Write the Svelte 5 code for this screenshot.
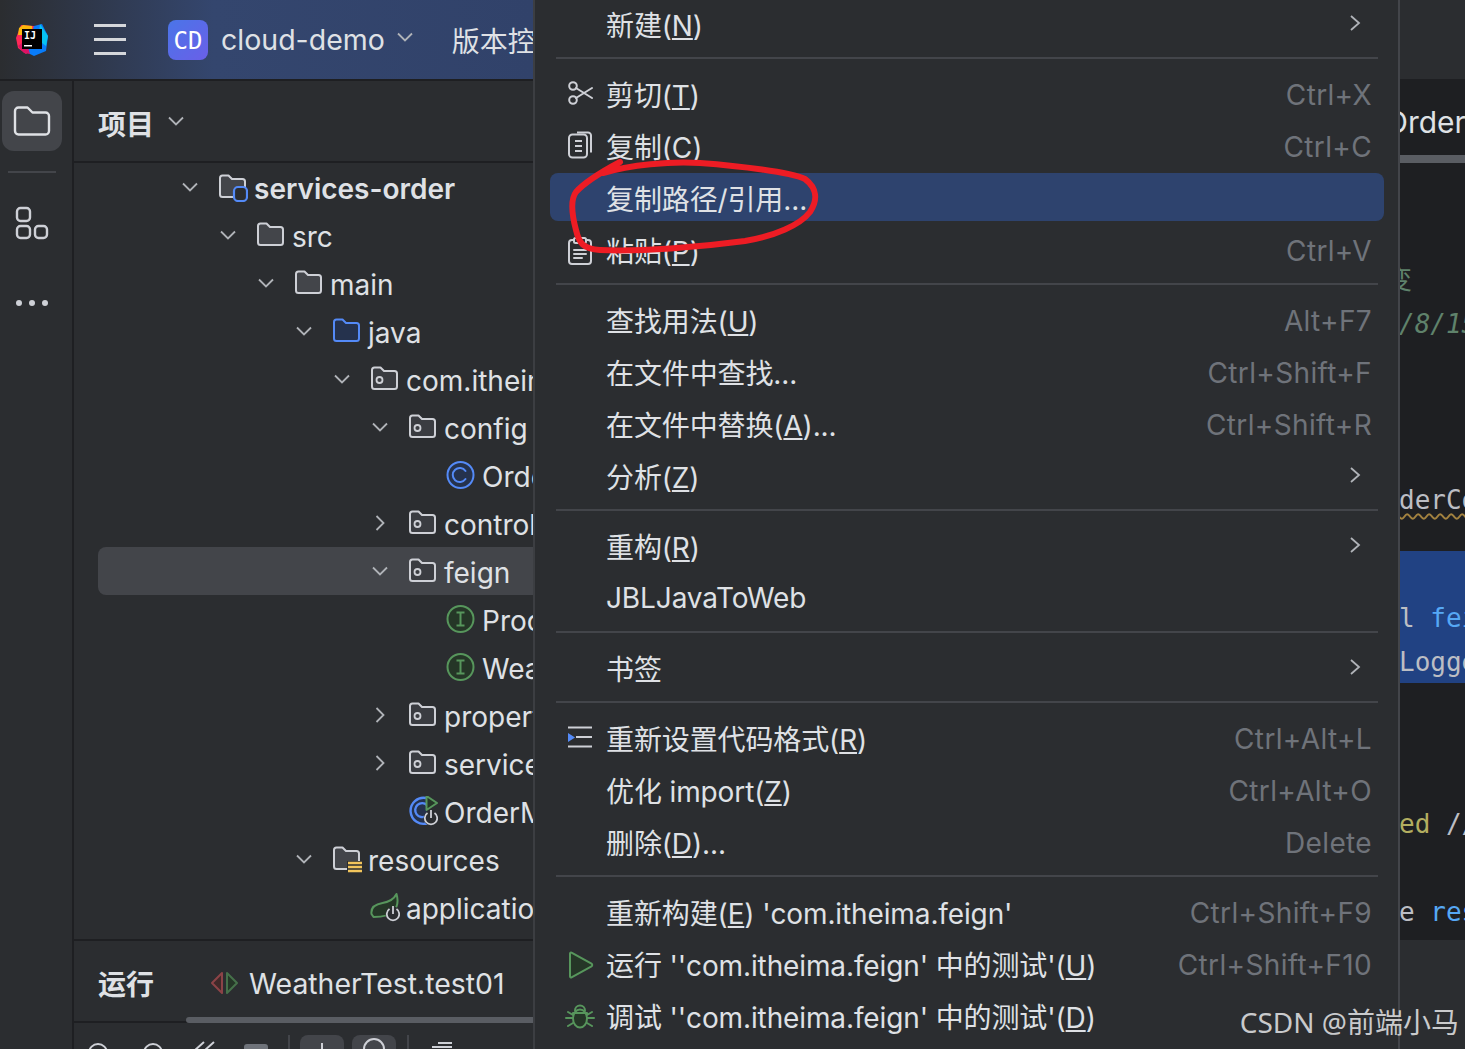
<script>
  const tree = [
    { d: 0, open: true, icon: 'module', name: 'services-order', bold: true },
    { d: 1, open: true, icon: 'folder', name: 'src' },
    { d: 2, open: true, icon: 'folder', name: 'main' },
    { d: 3, open: true, icon: 'java', name: 'java' },
    { d: 4, open: true, icon: 'pkg', name: 'com.itheima' },
    { d: 5, open: true, icon: 'pkg', name: 'config' },
    { d: 6, icon: 'class', name: 'OrderConfig' },
    { d: 5, open: false, icon: 'pkg', name: 'controller' },
    { d: 5, open: true, icon: 'pkg', name: 'feign', active: true },
    { d: 6, icon: 'iface', name: 'ProductClient' },
    { d: 6, icon: 'iface', name: 'WeatherClient' },
    { d: 5, open: false, icon: 'pkg', name: 'properties' },
    { d: 5, open: false, icon: 'pkg', name: 'service' },
    { d: 5, icon: 'spring', name: 'OrderMainApplication' },
    { d: 3, open: true, icon: 'res', name: 'resources' },
    { d: 4, icon: 'leaf', name: 'application.yml' }
  ];

  const menu = [
    [{ pre: '新建(', key: 'N', post: ')', more: true }],
    [
      { icon: 'cut', pre: '剪切(', key: 'T', post: ')', short: 'Ctrl+X' },
      { icon: 'copy', pre: '复制(', key: 'C', post: ')', short: 'Ctrl+C' },
      { pre: '复制路径/引用...', active: true },
      { icon: 'paste', pre: '粘贴(', key: 'P', post: ')', short: 'Ctrl+V' }
    ],
    [
      { pre: '查找用法(', key: 'U', post: ')', short: 'Alt+F7' },
      { pre: '在文件中查找...', short: 'Ctrl+Shift+F' },
      { pre: '在文件中替换(', key: 'A', post: ')...', short: 'Ctrl+Shift+R' },
      { pre: '分析(', key: 'Z', post: ')', more: true }
    ],
    [
      { pre: '重构(', key: 'R', post: ')', more: true },
      { pre: 'JBLJavaToWeb' }
    ],
    [{ pre: '书签', more: true }],
    [
      { icon: 'format', pre: '重新设置代码格式(', key: 'R', post: ')', short: 'Ctrl+Alt+L' },
      { pre: '优化 import(', key: 'Z', post: ')', short: 'Ctrl+Alt+O' },
      { pre: '删除(', key: 'D', post: ')...', short: 'Delete' }
    ],
    [
      { pre: '重新构建(', key: 'E', post: ") 'com.itheima.feign'", short: 'Ctrl+Shift+F9' },
      { icon: 'run', pre: '运行 \'\'com.itheima.feign\' 中的测试\'(', key: 'U', post: ')', short: 'Ctrl+Shift+F10' },
      { icon: 'debug', pre: '调试 \'\'com.itheima.feign\' 中的测试\'(', key: 'D', post: ')' }
    ]
  ];
</script>

{#snippet folderPath(stroke, fill)}
  <path d="M2 6a2.500 2.500 0 0 1 2.500-2.500h6l3.500 3.500h10.500a2.500 2.500 0 0 1 2.500 2.500v13a2.500 2.500 0 0 1-2.500 2.500h-20a2.500 2.500 0 0 1-2.500-2.500z" fill={fill} stroke={stroke} stroke-width="2" stroke-linejoin="round" />
{/snippet}

{#snippet power(cx, cy)}
  <circle cx={cx} cy={cy} r="7.500" fill="#2b2d30" />
  <path d="M{cx - 3.500} {cy - 5}A6.200 6.200 0 1 0 {cx + 3.500} {cy - 5}M{cx} {cy - 8}v8" stroke="#ced0d6" stroke-width="1.800" />
{/snippet}

{#snippet treeIcon(kind)}
  <svg class="ticon" width="30" height="30" viewBox="0 0 30 30" fill="none">
    {#if kind === 'folder'}
      {@render folderPath('#ced0d6', '#43454a')}
    {:else if kind === 'java'}
      {@render folderPath('#548af7', '#25324d')}
    {:else if kind === 'pkg'}
      {@render folderPath('#ced0d6', '#3a3c41')}
      <circle cx="9.500" cy="16" r="3" stroke="#ced0d6" stroke-width="1.800" />
    {:else if kind === 'module'}
      {@render folderPath('#ced0d6', '#43454a')}
      <rect x="16" y="15" width="13" height="14" rx="4" fill="#2b2d30" stroke="#548af7" stroke-width="2.200" />
    {:else if kind === 'res'}
      {@render folderPath('#ced0d6', '#43454a')}
      <rect x="15" y="17" width="15" height="13" fill="#2b2d30" />
      <path d="M16 19h14M16 23h14M16 27h14" stroke="#f2c55c" stroke-width="2.400" />
    {:else if kind === 'class'}
      <circle cx="14.500" cy="15" r="13" fill="#25324d" stroke="#548af7" stroke-width="2" />
      <path d="M19.500 11a7 7 0 1 0 0 8" stroke="#548af7" stroke-width="2" stroke-linecap="round" />
    {:else if kind === 'iface'}
      <circle cx="14.500" cy="15" r="13" fill="#253627" stroke="#57965c" stroke-width="2" />
      <path d="M10.500 8.500h8M10.500 21.500h8M14.500 8.500v13" stroke="#57965c" stroke-width="2" />
    {:else if kind === 'spring'}
      <path d="M18 2a13 13 0 1 0 2 25" fill="#25324d" stroke="#548af7" stroke-width="2.400" />
      <path d="M19 9a7 7 0 1 0-1 11" stroke="#548af7" stroke-width="2.400" />
      <path d="M18.500 0l10.500 7-10.500 7z" fill="#253627" stroke="#57965c" stroke-width="2" stroke-linejoin="round" />
      {@render power(23, 22)}
    {:else if kind === 'leaf'}
      <path d="M1.500 22c-1-7 5-10 11-11 6-1 11-3 14-9 2 7 1 13-3 17-4 5-13 6-20 6z" fill="#253627" stroke="#57965c" stroke-width="2" stroke-linejoin="round" />
      {@render power(23, 22)}
    {/if}
  </svg>
{/snippet}

{#snippet menuIcon(kind)}
  <svg class="micon" width="28" height="28" viewBox="0 0 28 28" fill="none">
    {#if kind === 'cut'}
      <circle cx="7" cy="5" r="3.800" stroke="#ced0d6" stroke-width="2" />
      <circle cx="7" cy="19" r="3.800" stroke="#ced0d6" stroke-width="2" />
      <path d="M10 7l16 10M10 17L26 7" stroke="#ced0d6" stroke-width="2" stroke-linecap="round" />
    {:else if kind === 'copy'}
      <rect x="3" y="1.500" width="18" height="23" rx="3.500" stroke="#ced0d6" stroke-width="2" />
      <path d="M11 -0.500h11a3 3 0 0 1 3 3v17M9 8h7M9 13h7M9 18h7" stroke="#ced0d6" stroke-width="2" />
    {:else if kind === 'paste'}
      <rect x="3" y="3" width="22" height="24" rx="3" stroke="#ced0d6" stroke-width="2" />
      <rect x="8" y="1" width="12" height="5" rx="1.500" fill="#2b2d30" stroke="#ced0d6" stroke-width="2" />
      <path d="M8 13h12M8 17h12M8 21h8" stroke="#ced0d6" stroke-width="2" stroke-linecap="round" />
    {:else if kind === 'format'}
      <path d="M2 2.500h24M10 12h16M2 21.500h24" stroke="#ced0d6" stroke-width="2" />
      <path d="M2 8v9l7-4.500z" fill="#548af7" />
    {:else if kind === 'run'}
      <path d="M4 2.500v23a1 1 0 0 0 1.500.8l20-11a1.500 1.500 0 0 0 0-2.600l-20-11a1 1 0 0 0-1.500.8z" fill="#253627" stroke="#57965c" stroke-width="2" stroke-linejoin="round" />
    {:else if kind === 'debug'}
      <ellipse cx="14" cy="15.500" rx="7" ry="9" fill="#253627" stroke="#57965c" stroke-width="2" />
      <path d="M9 7.500a5 5 0 0 1 10 0M7 10h14M7 15H0M21 15h7M2 9l5 3M26 9l-5 3M2 23l5-3M26 23l-5-3" stroke="#57965c" stroke-width="2" stroke-linecap="round" />
    {/if}
  </svg>
{/snippet}

<div class="shot">
  <section class="left">
    <header class="top">
      <div class="logo">
        <svg width="32" height="32" viewBox="0 0 32 32">
          <path d="M0 14L5 1l13 1 2 20-10 8L2 24z" fill="#fe2857" />
          <path d="M3 4l4-3 9 1 1 9L2 11z" fill="#fdb60d" />
          <path d="M18 2l8-2 6 12-2 15-12 5-8-4z" fill="#087cfa" />
          <path d="M24 0l8 12-2 10-8-6z" fill="#07c3f2" />
          <path d="M2 22l8-6 4 14-6-1z" fill="#dd1265" />
          <rect x="6" y="5" width="20" height="20" fill="#000" />
          <rect x="8" y="21" width="8" height="1.500" fill="#fff" />
        </svg>
        <span class="ij">IJ</span>
      </div>
      <div class="burger"><i></i><i></i><i></i></div>
      <div class="badge">CD</div>
      <span class="proj">cloud-demo</span>
      <svg class="chev" width="16" height="16" viewBox="0 0 16 16" fill="none"><path d="M1 4.500l7 7 7-7" stroke="#b0b3b8" stroke-width="1.800" /></svg>
      <span class="vcs">版本控制</span>
    </header>

    <div class="body">
      <nav class="rail">
        <div class="rail-btn">
          <svg width="38" height="32" viewBox="0 0 38 32" fill="none"><path d="M2 6a3.500 3.500 0 0 1 3.500-3.500h9l5 5h13a3.500 3.500 0 0 1 3.500 3.500v15a3.500 3.500 0 0 1-3.500 3.500h-27a3.500 3.500 0 0 1-3.500-3.500z" stroke="#dfe1e5" stroke-width="2.400" stroke-linejoin="round" /></svg>
        </div>
        <div class="rail-sep"></div>
        <svg class="rail-mods" width="34" height="34" viewBox="0 0 34 34" fill="none">
          <rect x="2" y="2" width="13" height="13" rx="3.500" stroke="#ced0d6" stroke-width="2.400" />
          <rect x="2" y="20" width="13" height="12" rx="3.500" stroke="#ced0d6" stroke-width="2.400" />
          <rect x="20" y="20" width="12" height="12" rx="3.500" stroke="#ced0d6" stroke-width="2.400" />
        </svg>
        <div class="rail-more"><i></i><i></i><i></i></div>
      </nav>

      <div class="pane">
        <div class="pane-head">
          <strong>项目</strong>
          <svg width="16" height="16" viewBox="0 0 16 16" fill="none"><path d="M1 4.500l7 7 7-7" stroke="#b0b3b8" stroke-width="1.800" /></svg>
        </div>

        <div class="tree">
          {#each tree as row}
            <div class="row" class:active={row.active} style="padding-left: {84 + row.d * 38}px">
              <span class="caret">
                {#if row.open === true}
                  <svg width="16" height="16" viewBox="0 0 16 16" fill="none"><path d="M1 4.500l7 7 7-7" stroke="#b0b3b8" stroke-width="1.800" /></svg>
                {:else if row.open === false}
                  <svg width="16" height="16" viewBox="0 0 16 16" fill="none"><path d="M4.500 1l7 7-7 7" stroke="#b0b3b8" stroke-width="1.800" /></svg>
                {/if}
              </span>
              {@render treeIcon(row.icon)}
              <span class="name" class:bold={row.bold}>{row.name}</span>
            </div>
          {/each}
        </div>

        <div class="run">
          <div class="run-tabs">
            <strong>运行</strong>
            <svg class="run-state" width="30" height="26" viewBox="0 0 30 26" fill="none">
              <path d="M12 3L2 13l10 10z" fill="#402929" stroke="#8c4347" stroke-width="2" stroke-linejoin="round" />
              <path d="M17 3l10 10-10 10z" fill="#253627" stroke="#46714a" stroke-width="2" stroke-linejoin="round" />
            </svg>
            <span>WeatherTest.test01</span>
            <i class="thumb"></i>
          </div>
          <div class="run-tools">
            <svg class="tool" width="22" height="22" viewBox="0 0 22 22" fill="none"><circle cx="11" cy="14" r="9" stroke="#ced0d6" stroke-width="2" /></svg>
            <svg class="tool gap1" width="22" height="22" viewBox="0 0 22 22" fill="none"><circle cx="11" cy="14" r="9" stroke="#ced0d6" stroke-width="2" /></svg>
            <svg class="tool gap2" width="24" height="22" viewBox="0 0 24 22" fill="none"><path d="M2 12l10-9M12 12l10-9" stroke="#ced0d6" stroke-width="2" /></svg>
            <i class="stop"></i>
            <i class="tsep"></i>
            <div class="tbtn"><svg width="22" height="22" viewBox="0 0 22 22" fill="none"><path d="M11 8v10" stroke="#ced0d6" stroke-width="2" /></svg></div>
            <div class="tbtn"><svg width="28" height="22" viewBox="0 0 28 22" fill="none"><circle cx="14" cy="14" r="10" stroke="#ced0d6" stroke-width="2" /></svg></div>
            <i class="tsep second"></i>
            <svg class="tool gap3" width="24" height="22" viewBox="0 0 24 22" fill="none"><path d="M2 8h20M8 4h14" stroke="#ced0d6" stroke-width="2" /></svg>
          </div>
        </div>
      </div>
    </div>
  </section>

  <section class="menu">
    <div class="menu-in">
      {#each menu as group, i}
        {#if i > 0}<div class="msep"></div>{/if}
        {#each group as item}
          <div class="mrow" class:active={item.active}>
            <span class="mi">
              {#if item.icon}{@render menuIcon(item.icon)}{/if}
            </span>
            <span class="ml">{item.pre}{#if item.key}<u>{item.key}</u>{/if}{item.post || ''}</span>
            {#if item.short}<span class="ms">{item.short}</span>{/if}
            {#if item.more}
              <svg class="mc" width="16" height="18" viewBox="0 0 16 18" fill="none"><path d="M3 2l8 7-8 7" stroke="#b0b3b8" stroke-width="1.800" /></svg>
            {/if}
          </div>
        {/each}
      {/each}
    </div>
  </section>

  <section class="editor">
    <div class="ed-top"></div>
    <div class="ed-tab"><span>OrderController</span></div>
    <div class="ed-rule"></div>
    <div class="code">
      <div class="ln zh first">变</div>
      <div class="ln date">/8/15</div>
      <div class="ln warn"><span>derController</span></div>
      <div class="sel">
        <div class="ln"><span class="plain">l</span> <span class="blue">feign</span></div>
        <div class="ln plain">Logger</div>
      </div>
      <div class="ln gap-b"><span class="yellow">ed</span> <span class="plain">//</span></div>
      <div class="ln gap-c"><span class="plain">e</span> <span class="blue">res</span></div>
    </div>
    <div class="ed-foot"></div>
  </section>

  <svg class="ink" width="1465" height="1049" viewBox="0 0 1465 1049" fill="none">
    <path d="M620 162C605 170 585 182 576 192C570 200 572 215 576 230C579 243 583 249 600 250C640 252 700 247 745 241C775 236 800 225 810 212C818 200 817 188 805 179C790 172 740 166 700 163C670 161 630 165 603 173" stroke="#ed1c24" stroke-width="6" stroke-linecap="round" />
  </svg>
  <div class="mark">CSDN @前端小马</div>
</div>

<style>
  :global(body) {
    margin: 0;
    background: #1e1f22;
  }

  .shot {
    position: relative;
    display: flex;
    width: 1465px;
    height: 1049px;
    overflow: hidden;
    font-family: "Inter", "Noto Sans CJK SC", sans-serif;
    font-size: 28px;
    color: #dfe1e5;
  }

  .left {
    flex: 0 0 533px;
    display: flex;
    flex-direction: column;
    overflow: hidden;
    background: #2b2d30;
  }

  .top {
    flex: 0 0 79px;
    display: flex;
    align-items: center;
    white-space: nowrap;
    background: linear-gradient(90deg, #2b2d30 0%, #34466e 40%, #31426a 100%);
  }

  .top > * {
    flex-shrink: 0;
  }

  .logo {
    position: relative;
    width: 32px;
    height: 32px;
    margin-left: 16px;
  }

  .ij {
    position: absolute;
    left: 8px;
    top: 6px;
    font-family: "DejaVu Sans Mono", monospace;
    font-size: 10px;
    font-weight: 700;
    color: #fff;
    line-height: 12px;
  }

  .burger {
    display: flex;
    flex-direction: column;
    gap: 11px;
    margin-left: 46px;
    width: 32px;
  }

  .burger i {
    display: block;
    height: 3px;
    background: #d5d7db;
  }

  .badge {
    width: 40px;
    height: 40px;
    margin-left: 42px;
    border-radius: 8px;
    background: linear-gradient(135deg, #4a75e8, #6a5fe8);
    color: #fff;
    font-family: "DejaVu Sans Mono", monospace;
    font-size: 24px;
    line-height: 42px;
    text-align: center;
  }

  .proj {
    margin-left: 13px;
    font-size: 28.500px;
  }

  .chev {
    margin: 0 0 6px 12px;
  }

  .vcs {
    margin-left: 39px;
    font-size: 28px;
  }

  .body {
    flex: 1;
    display: flex;
    min-height: 0;
    border-top: 2px solid #1e1f22;
  }

  .rail {
    flex: 0 0 74px;
    box-sizing: border-box;
    border-right: 2px solid #1e1f22;
    display: flex;
    flex-direction: column;
    align-items: flex-start;
  }

  .rail-btn {
    width: 60px;
    height: 60px;
    margin: 10px 0 0 2px;
    border-radius: 12px;
    background: #43454a;
    display: flex;
    align-items: center;
    justify-content: center;
  }

  .rail-sep {
    width: 48px;
    height: 2px;
    margin: 20px 0 0 8px;
    background: #43454a;
  }

  .rail-mods {
    margin: 33px 0 0 15px;
  }

  .rail-more {
    display: flex;
    gap: 7px;
    margin: 60px 0 0 16px;
  }

  .rail-more i {
    width: 6px;
    height: 6px;
    border-radius: 50%;
    background: #ced0d6;
  }

  .pane {
    flex: 1;
    min-width: 0;
    display: flex;
    flex-direction: column;
  }

  .pane-head {
    flex: 0 0 82px;
    box-sizing: border-box;
    border-bottom: 2px solid #1e1f22;
    display: flex;
    align-items: center;
    gap: 14px;
    padding-left: 24px;
  }

  .pane-head strong {
    padding-top: 4px;
    font-weight: 700;
  }

  .run-tabs strong {
    font-weight: 700;
  }

  .tree {
    flex: 0 0 776px;
    overflow: hidden;
  }

  .row {
    display: flex;
    align-items: center;
    height: 48px;
    margin-left: 24px;
    white-space: nowrap;
    border-radius: 8px 0 0 8px;
  }

  .row.active {
    background: #43454a;
  }

  .caret {
    flex: 0 0 16px;
    height: 16px;
    display: flex;
    margin-right: 20px;
  }

  .ticon {
    flex: 0 0 30px;
  }

  .name {
    margin-left: 6px;
    padding-top: 4px;
    line-height: 44px;
  }

  .name.bold {
    font-weight: 600;
  }

  .run {
    flex: 1;
    border-top: 2px solid #1e1f22;
    overflow: hidden;
  }

  .run-tabs {
    position: relative;
    height: 82px;
    box-sizing: border-box;
    border-bottom: 2px solid #1e1f22;
    display: flex;
    align-items: center;
    padding: 4px 0 0 24px;
    white-space: nowrap;
  }

  .run-state {
    margin-left: 56px;
  }

  .run-tabs span {
    margin-left: 9px;
    font-size: 28.400px;
  }

  .thumb {
    position: absolute;
    left: 112px;
    right: 0;
    bottom: -2px;
    height: 6px;
    border-radius: 3px 0 0 3px;
    background: #5a5d63;
  }

  .run-tools {
    display: flex;
    align-items: flex-start;
    padding-top: 12px;
    padding-left: 13px;
  }

  .tool {
    margin-top: 4px;
  }

  .gap1 {
    margin-left: 33px;
  }

  .gap2 {
    margin-left: 28px;
  }

  .gap3 {
    margin-left: 11px;
  }

  .stop {
    width: 24px;
    height: 10px;
    margin: 9px 0 0 28px;
    border-radius: 3px;
    background: #6f737a;
  }

  .tsep {
    width: 2px;
    height: 20px;
    margin: 0 10px 0 20px;
    background: #43454a;
  }

  .tsep.second {
    margin-left: 3px;
  }

  .tbtn {
    width: 44px;
    height: 30px;
    margin-right: 8px;
    border-radius: 8px;
    background: #43454a;
    display: flex;
    justify-content: center;
  }

  .menu {
    flex: 0 0 867px;
    box-sizing: border-box;
    border-left: 2px solid #3c3e42;
    border-right: 2px solid #43454a;
    background: #2b2d30;
    overflow: hidden;
  }

  .menu-in {
    margin-top: -1px;
  }

  .msep {
    height: 2px;
    margin: 6px 20px 10px 21px;
    background: #43454a;
  }

  .mrow {
    position: relative;
    display: flex;
    align-items: center;
    height: 52px;
    margin: 0 14px 0 15px;
    padding: 0 12px 0 16px;
    white-space: nowrap;
  }

  .mrow.active::before {
    content: "";
    position: absolute;
    inset: 0 0 4px 0;
    border-radius: 8px;
    background: #2e436e;
  }

  .mi {
    position: relative;
    flex: 0 0 28px;
    height: 28px;
    margin-right: 12px;
  }

  .micon {
    display: block;
    overflow: visible;
  }

  .ml {
    position: relative;
    flex: 1;
    padding-bottom: 2px;
    font-size: 28px;
    letter-spacing: -0.120px;
  }

  .ms {
    color: #6f737a;
    font-size: 28px;
    letter-spacing: 0.350px;
  }

  .mc {
    margin: 0 8px 4px 0;
  }

  .editor {
    flex: 1;
    min-width: 0;
    display: flex;
    flex-direction: column;
    overflow: hidden;
    background: #1e1f22;
    white-space: nowrap;
  }

  .ed-top {
    flex: 0 0 79px;
    background: #2b2d30;
  }

  .ed-tab {
    flex: 0 0 76px;
    display: flex;
    align-items: center;
    padding-top: 10px;
    box-sizing: border-box;
    font-size: 30px;
  }

  .ed-tab span {
    margin-left: -15px;
  }

  .ed-rule {
    flex: 0 0 8px;
    background: #5a5d63;
  }

  .code {
    flex: 0 0 777px;
    font-family: "DejaVu Sans Mono", "Noto Sans CJK SC", monospace;
    font-size: 26px;
  }

  .ln {
    height: 44px;
    margin-left: -1px;
    line-height: 46px;
  }

  .ln.first {
    margin-top: 94px;
  }

  .zh {
    margin-left: -14px;
    color: #5f826b;
  }

  .date {
    color: #5f826b;
    font-style: italic;
  }

  .warn {
    margin-top: 132px;
    color: #bcbec4;
  }

  .warn span {
    text-decoration: underline wavy #a3823f 2px;
    text-underline-offset: 4px;
  }

  .sel {
    height: 132px;
    margin-top: 30px;
    padding-top: 44px;
    box-sizing: border-box;
    background: #214283;
  }

  .gap-b {
    margin-top: 118px;
  }

  .gap-c {
    margin-top: 44px;
  }

  .plain {
    color: #bcbec4;
  }

  .blue {
    color: #56a8f5;
  }

  .yellow {
    color: #b3ae60;
  }

  .ed-foot {
    flex: 1;
    background: #2b2d30;
  }

  .ink {
    position: absolute;
    inset: 0;
    pointer-events: none;
  }

  .mark {
    position: absolute;
    right: 6px;
    bottom: 8px;
    font-family: "Noto Sans", "Noto Sans CJK SC", sans-serif;
    font-size: 28px;
    line-height: 38px;
    color: #c9cacc;
  }
</style>
